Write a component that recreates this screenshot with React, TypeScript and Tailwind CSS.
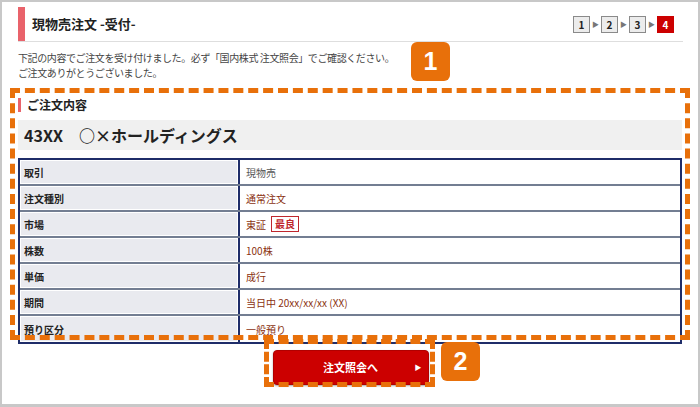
import React from "react";

const rows: { label: string; value: React.ReactNode; plain?: boolean }[] = [
  { label: "取引", value: "現物売", plain: true },
  { label: "注文種別", value: "通常注文" },
  {
    label: "市場",
    value: (
      <span className="flex items-center gap-[5px]">
        東証
        <span className="border border-[#c0272d] text-[#c0272d] px-[3px] leading-[14px] text-[10px] font-bold">最良</span>
      </span>
    ),
  },
  { label: "株数", value: "100株" },
  { label: "単価", value: "成行" },
  { label: "期間", value: "当日中 20xx/xx/xx (XX)" },
  { label: "預り区分", value: "一般預り" },
];

function Step({ n, active }: { n: number; active?: boolean }) {
  return (
    <span
      className={
        active
          ? "w-[17px] h-[17px] flex items-center justify-center bg-[#cc0000] text-white text-[10px] font-bold"
          : "w-[17px] h-[17px] flex items-center justify-center bg-[#ececec] border border-[#8a8a8a] text-[#222] text-[10px] font-bold"
      }
    >
      {n}
    </span>
  );
}

function Arrow() {
  return <span className="w-[11px] text-center text-[7px] text-[#777]">▶</span>;
}

function Badge({ n, className }: { n: number; className: string }) {
  return (
    <div
      className={
        "absolute w-[39px] h-[39px] rounded-[6px] bg-[#e8700a] text-white text-[25px] font-bold flex items-center justify-center " +
        className
      }
      style={{ fontFamily: "Arial, 'Liberation Sans', sans-serif" }}
    >
      {n}
    </div>
  );
}

export default function App() {
  return (
    <div
      className="relative w-[700px] h-[407px] border-2 border-b-[3px] border-[#c8c8c8] bg-white text-[#333] overflow-hidden"
      style={{ fontFamily: "'Noto Sans CJK JP', 'Noto Sans', sans-serif" }}
    >
      <div className="pt-[5px] pl-4 pr-[15px]">
        {/* Header */}
        <div className="flex items-center h-[35px] border-b border-[#dedede]">
          <div className="w-[7px] self-stretch bg-[#e9636b]" />
          <p className="ml-[7px] text-[13px] font-bold text-[#222]">現物売注文 -受付-</p>
          <div className="ml-auto mr-[9px] flex items-center">
            <Step n={1} />
            <Arrow />
            <Step n={2} />
            <Arrow />
            <Step n={3} />
            <Arrow />
            <Step n={4} active />
          </div>
        </div>

        <div className="mt-[8px] text-[10px] tracking-[-0.4px] leading-[15px] text-[#444]">
          <p>下記の内容でご注文を受け付けました。必ず「国内株式 注文照会」でご確認ください。</p>
          <p>ご注文ありがとうございました。</p>
        </div>

        {/* Order content */}
        <div className="mt-[18px] flex items-center h-[14px]">
          <div className="w-[3px] h-[14px] bg-[#e9636b]" />
          <p className="ml-[6px] text-[12px] font-bold text-[#222]">ご注文内容</p>
        </div>

        <div className="mt-[8px] h-[30px] mr-[1px] bg-[#f0f0f0] flex items-center pl-[6px] text-[16px] font-bold text-[#222]">
          43XX　○×ホールディングス
        </div>

        <div className="mt-[8px] mr-[1px] border-2 border-[#1f2d69]">
          {rows.map((r, i) => (
            <div
              key={r.label}
              className={
                "flex h-[26px] " + (i < rows.length - 1 ? "border-b-2 border-[#737e92]" : "")
              }
            >
              <div className="w-[220px] shrink-0 bg-[#e9eaef] shadow-[inset_0_0_0_1px_#ffffff] border-r-2 border-[#1f2d69] flex items-center pl-[4px] text-[10px] font-bold text-[#222]">
                {r.label}
              </div>
              <div
                className={
                  "flex-1 flex items-center pl-[6px] text-[10px] " +
                  (r.plain ? "text-[#555]" : "text-[#8a3210]")
                }
              >
                {r.value}
              </div>
            </div>
          ))}
        </div>

        <div className="mt-[6px] flex justify-center">
          <button className="relative w-[156px] h-[35px] rounded-[4px] bg-[#cc0000] border border-[#b00000] shadow-[0_1px_2px_rgba(0,0,0,0.35)] text-white text-[11px] font-bold flex items-center justify-center">
            注文照会へ
            <span className="absolute right-[6px] text-[7px]">▶</span>
          </button>
        </div>
      </div>

      {/* Annotation overlays */}
      <div className="absolute left-[8px] top-[86px] w-[680px] h-[252px] border-[5px] border-dashed border-[#e8700a] pointer-events-none" />
      <div className="absolute left-[262px] top-[337px] w-[171px] h-[48px] border-[5px] border-dashed border-[#e8700a] pointer-events-none" />
      <Badge n={1} className="left-[409px] top-[40px]" />
      <Badge n={2} className="left-[439px] top-[340px]" />
    </div>
  );
}
